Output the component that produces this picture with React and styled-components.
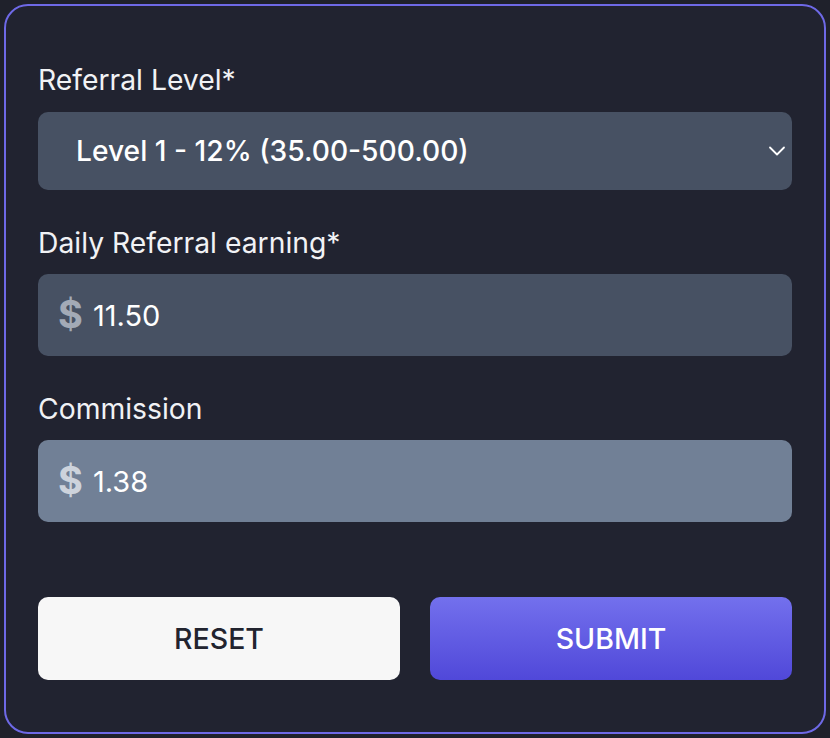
import React, { useState } from "react";
import styled, { createGlobalStyle } from "styled-components";

const GlobalStyle = createGlobalStyle`
  html, body {
    margin: 0;
    padding: 0;
    background: #1f212b;
  }
  * {
    box-sizing: border-box;
  }
  body {
    font-family: Inter, "Noto Sans", sans-serif;
  }
`;

const Page = styled.div`
  width: 830px;
  height: 738px;
  padding: 4px;
`;

const Card = styled.form`
  height: 100%;
  border: 2px solid #6e69e6;
  border-radius: 24px;
  background: #212330;
  padding: 56px 32px 0;
  display: flex;
  flex-direction: column;
`;

const Field = styled.div`
  display: flex;
  flex-direction: column;
  gap: ${(p) => p.$gap || 13}px;
  margin-bottom: ${(p) => p.$spacing ?? 35}px;
`;

const Label = styled.label`
  color: #f1f2f5;
  font-size: 28.3px;
  line-height: 36px;
  font-weight: 400;
`;

const SelectWrap = styled.div`
  position: relative;
  height: 78px;
`;

const Select = styled.select`
  appearance: none;
  width: 100%;
  height: 100%;
  border: none;
  border-radius: 10px;
  background: #475163;
  color: #fff;
  font-family: Inter, "Noto Sans", sans-serif;
  font-size: 28.2px;
  font-weight: 500;
  padding: 0 60px 0 38px;
  outline: none;
`;

const Chevron = styled.svg`
  position: absolute;
  right: 6px;
  top: 50%;
  transform: translateY(-50%);
  pointer-events: none;
`;

const InputBox = styled.div`
  height: 82px;
  border-radius: 10px;
  background: ${(p) => (p.$muted ? "#718096" : "#475163")};
  display: flex;
  align-items: center;
  padding: 0 20px;
  gap: 10px;
`;

const Dollar = styled.span`
  font-size: 38px;
  font-weight: 700;
  color: ${(p) => (p.$muted ? "#cdd3dc" : "#a3aab6")};
  line-height: 1;
  margin-top: -2px;
`;

const Input = styled.input`
  flex: 1;
  border: none;
  background: transparent;
  color: #fff;
  font-family: Inter, "Noto Sans", sans-serif;
  font-size: 29px;
  outline: none;
  padding: 0;
`;

const Buttons = styled.div`
  display: grid;
  grid-template-columns: 1fr 1fr;
  gap: 30px;
  margin-top: 75px;
`;

const Button = styled.button`
  height: 83px;
  border: none;
  border-radius: 10px;
  font-family: Inter, "Noto Sans", sans-serif;
  font-size: 28.5px;
  font-weight: 500;
  cursor: pointer;
  color: ${(p) => (p.$primary ? "#ffffff" : "#22242f")};
  background: ${(p) =>
    p.$primary ? "linear-gradient(180deg, #7370ed 0%, #5048d9 100%)" : "#f7f7f7"};
`;

export default function App() {
  const [level, setLevel] = useState("1");
  const [earning, setEarning] = useState("11.50");

  return (
    <>
      <GlobalStyle />
      <Page>
        <Card onSubmit={(e) => e.preventDefault()}>
          <Field $gap={14}>
            <Label>Referral Level*</Label>
            <SelectWrap>
              <Select value={level} onChange={(e) => setLevel(e.target.value)}>
                <option value="1">Level 1 - 12% (35.00-500.00)</option>
              </Select>
              <Chevron width="18" height="10" viewBox="0 0 18 10" fill="none" stroke="#fff" strokeWidth="1.8" strokeLinecap="round" strokeLinejoin="round">
                <path d="M2 1.5l7 7 7-7" />
              </Chevron>
            </SelectWrap>
          </Field>
          <Field>
            <Label>Daily Referral earning*</Label>
            <InputBox>
              <Dollar>$</Dollar>
              <Input value={earning} onChange={(e) => setEarning(e.target.value)} />
            </InputBox>
          </Field>
          <Field $spacing={0}>
            <Label>Commission</Label>
            <InputBox $muted>
              <Dollar $muted>$</Dollar>
              <Input value="1.38" readOnly />
            </InputBox>
          </Field>
          <Buttons>
            <Button type="reset">RESET</Button>
            <Button type="submit" $primary>SUBMIT</Button>
          </Buttons>
        </Card>
      </Page>
    </>
  );
}
